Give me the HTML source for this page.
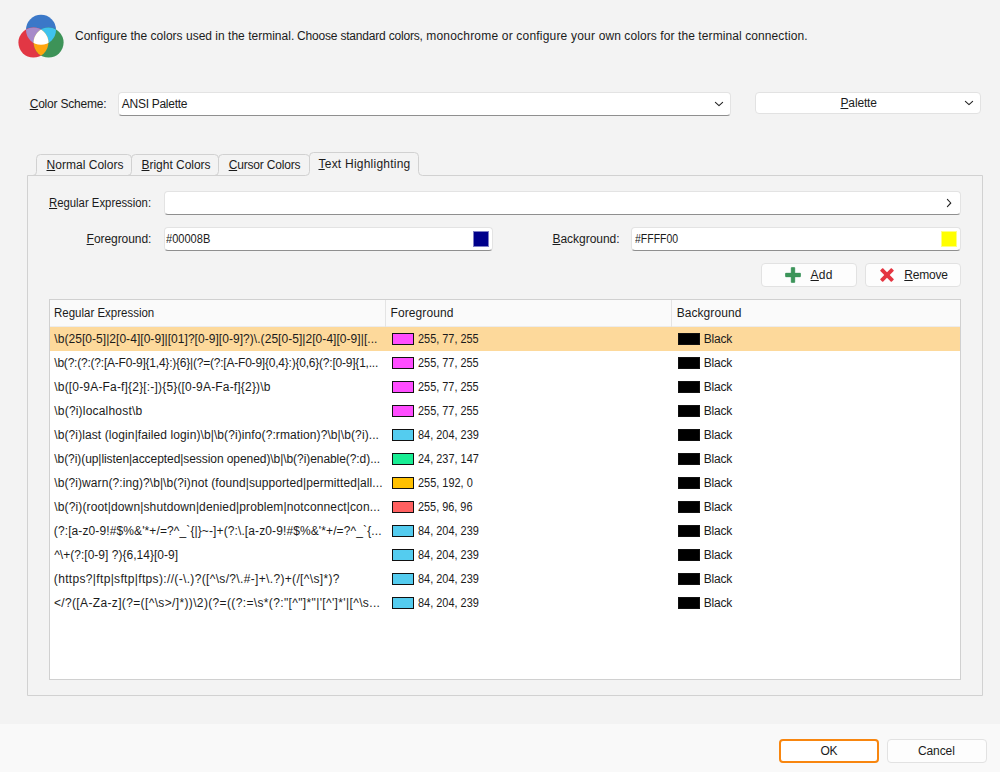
<!DOCTYPE html>
<html lang="en">
<head>
<meta charset="utf-8">
<title>Terminal Colors</title>
<style>
*{box-sizing:border-box;margin:0;padding:0}
html,body{width:1000px;height:772px;overflow:hidden;background:#f3f3f3}
body{position:relative;font-family:"Liberation Sans",sans-serif;font-size:12px;color:#1b1b1b;line-height:14px}
.a{position:absolute;white-space:nowrap}
.t{position:absolute;white-space:nowrap;height:14px}
u{text-decoration:underline;text-decoration-thickness:1px;text-underline-offset:1px}
.in{position:absolute;background:#fff;border:1px solid #e3e3e3;border-bottom-color:#8f8f8f;border-radius:4px}
.bt{position:absolute;background:#fdfdfd;border:1px solid #e2e2e2;border-radius:4px}
.sw{position:absolute;width:22px;height:12px;border:1px solid #111}
</style>
</head>
<body>

<div class="a" style="left:0;top:724px;width:1000px;height:48px;background:#f9f9f9"></div>
<svg class="a" style="left:14px;top:10px" width="54" height="52" viewBox="14 10 54 52">
<defs><clipPath id="cb"><circle cx="41" cy="29.8" r="15"/></clipPath><clipPath id="cr"><circle cx="33.4" cy="42.6" r="15"/></clipPath></defs>
<circle cx="41" cy="29.8" r="15" fill="#3b78c8"/>
<circle cx="33.4" cy="42.6" r="15" fill="#e23744"/>
<circle cx="48.6" cy="42.6" r="15" fill="#3d9358"/>
<circle cx="33.4" cy="42.6" r="15" fill="#a78bc9" clip-path="url(#cb)"/>
<circle cx="48.6" cy="42.6" r="15" fill="#3fc3ee" clip-path="url(#cb)"/>
<circle cx="48.6" cy="42.6" r="15" fill="#ffa50f" clip-path="url(#cr)"/>
<g clip-path="url(#cb)"><circle cx="48.6" cy="42.6" r="15" fill="#fff" clip-path="url(#cr)"/></g>
</svg>
<div class="in" style="left:118px;top:92px;width:613px;height:24px"></div>
<svg class="a" style="left:713px;top:99px" width="12" height="10"><path d="M2.4 3.4 L6 6.7 L9.6 3.4" fill="none" stroke="#222" stroke-width="1.1" stroke-linecap="round" stroke-linejoin="round"/></svg>
<div class="bt" style="left:755px;top:92px;width:226px;height:22px;background:#fff"></div>
<svg class="a" style="left:963px;top:98px" width="12" height="10"><path d="M2.4 3.35 L6 6.6 L9.6 3.35" fill="none" stroke="#222" stroke-width="1.1" stroke-linecap="round" stroke-linejoin="round"/></svg>
<svg class="a" style="left:0;top:140px" width="1000" height="570" viewBox="0 140 1000 570" fill="none" stroke="#d1d1d1" stroke-width="1">
<path d="M27.5 695.5 L27.5 175.5 L305.5 175.5 Q309.5 175.5 309.5 171.5 L309.5 156.5 Q309.5 152.5 313.5 152.5 L414.5 152.5 Q418.5 152.5 418.5 156.5 L418.5 171.5 Q418.5 175.5 422.5 175.5 L982.5 175.5 L982.5 695.5 Z"/>
<path d="M33 175.5 Q36.5 175.5 36.5 171.5 L36.5 158.5 Q36.5 154.5 40.5 154.5 L127.5 154.5 Q131.5 154.5 131.5 158.5 L131.5 171.5 Q131.5 175.5 127.5 175.5"/>
<path d="M131.5 158.5 Q131.5 154.5 135.5 154.5 L214.5 154.5 Q218.5 154.5 218.5 158.5 L218.5 171.5 Q218.5 175.5 214.5 175.5"/>
<path d="M218.5 158.5 Q218.5 154.5 222.5 154.5 L305.5 154.5 Q308.5 154.5 309.5 157"/>
</svg>
<div class="in" style="left:164px;top:191px;width:797px;height:24px"></div>
<svg class="a" style="left:944px;top:197px" width="10" height="12"><path d="M3.4 2.3 L6.8 6 L3.4 9.6" fill="none" stroke="#222" stroke-width="1.1" stroke-linecap="round" stroke-linejoin="round"/></svg>
<div class="in" style="left:164px;top:227px;width:329px;height:24px"></div>
<div class="a" style="left:473px;top:231px;width:16px;height:16px;background:#00008b;border:1px solid #7f7fc5"></div>
<div class="in" style="left:631px;top:227px;width:330px;height:24px"></div>
<div class="a" style="left:941px;top:231px;width:16px;height:16px;background:#ffff00;border:1px solid #ffff80"></div>
<div class="bt" style="left:761px;top:263px;width:96px;height:24px"></div>
<svg class="a" style="left:785px;top:267px" width="16" height="16" fill="#3d9559" stroke="#35905a" stroke-width="0.4"><rect x="6.1" y="0.2" width="3.8" height="15.6" rx="0.8"/><rect x="0.2" y="6.1" width="15.6" height="3.8" rx="0.8"/></svg>
<div class="bt" style="left:865px;top:263px;width:96px;height:24px"></div>
<svg class="a" style="left:879px;top:267px" width="16" height="16" fill="#e43541"><g transform="translate(8 8)"><rect x="-8" y="-1.9" width="16" height="3.8" rx="0.5" transform="rotate(45)"/><rect x="-8" y="-1.9" width="16" height="3.8" rx="0.5" transform="rotate(-45)"/></g></svg>
<div class="a" style="left:49px;top:299px;width:912px;height:381px;background:#fff;border:1px solid #d0d0d0"></div>
<div class="a" style="left:50px;top:300px;width:910px;height:27px;background:#fafafa;border-bottom:1px solid #ececec"></div>
<div class="a" style="left:385px;top:300px;width:1px;height:27px;background:#e4e4e4"></div>
<div class="a" style="left:671px;top:300px;width:1px;height:27px;background:#e4e4e4"></div>
<div class="a" style="left:50px;top:327px;width:910px;height:24px;background:#fdd99b"></div>
<div class="sw" style="left:392px;top:333px;background:#ff4dff"></div>
<div class="sw" style="left:678px;top:333px;background:#000"></div>
<div class="sw" style="left:392px;top:357px;background:#ff4dff"></div>
<div class="sw" style="left:678px;top:357px;background:#000"></div>
<div class="sw" style="left:392px;top:381px;background:#ff4dff"></div>
<div class="sw" style="left:678px;top:381px;background:#000"></div>
<div class="sw" style="left:392px;top:405px;background:#ff4dff"></div>
<div class="sw" style="left:678px;top:405px;background:#000"></div>
<div class="sw" style="left:392px;top:429px;background:#54ccef"></div>
<div class="sw" style="left:678px;top:429px;background:#000"></div>
<div class="sw" style="left:392px;top:453px;background:#18ed93"></div>
<div class="sw" style="left:678px;top:453px;background:#000"></div>
<div class="sw" style="left:392px;top:477px;background:#ffc000"></div>
<div class="sw" style="left:678px;top:477px;background:#000"></div>
<div class="sw" style="left:392px;top:501px;background:#ff6060"></div>
<div class="sw" style="left:678px;top:501px;background:#000"></div>
<div class="sw" style="left:392px;top:525px;background:#54ccef"></div>
<div class="sw" style="left:678px;top:525px;background:#000"></div>
<div class="sw" style="left:392px;top:549px;background:#54ccef"></div>
<div class="sw" style="left:678px;top:549px;background:#000"></div>
<div class="sw" style="left:392px;top:573px;background:#54ccef"></div>
<div class="sw" style="left:678px;top:573px;background:#000"></div>
<div class="sw" style="left:392px;top:597px;background:#54ccef"></div>
<div class="sw" style="left:678px;top:597px;background:#000"></div>
<div class="bt" style="left:779px;top:739px;width:100px;height:24px;border:2px solid #f8860f;border-radius:4px;background:#fff"></div>
<div class="bt" style="left:887px;top:739px;width:100px;height:24px"></div>
<div class="t" id="t0" style="left:75.0px;top:29px;letter-spacing:0.011px">Configure the colors used in the terminal.</div>
<div class="t" id="t1" style="left:297.0px;top:29px;letter-spacing:-0.187px">Choose standard colors,</div>
<div class="t" id="t2" style="left:426.3px;top:29px;letter-spacing:0.193px">monochrome or configure your own</div>
<div class="t" id="t3" style="left:624.3px;top:29px;letter-spacing:0.092px">colors for the terminal connection.</div>
<div class="t" id="t4" style="left:29.7px;top:97px;letter-spacing:-0.214px"><u>C</u>olor Scheme:</div>
<div class="t" id="t5" style="left:121.8px;top:97px;letter-spacing:-0.280px">ANSI Palette</div>
<div class="t" id="t6" style="left:840.5px;top:96px;letter-spacing:-0.157px"><u>P</u>alette</div>
<div class="t" id="t7" style="left:46.5px;top:158px;letter-spacing:0.030px"><u>N</u>ormal Colors</div>
<div class="t" id="t8" style="left:141.5px;top:158px;letter-spacing:-0.029px"><u>B</u>right Colors</div>
<div class="t" id="t9" style="left:228.7px;top:158px;letter-spacing:-0.186px"><u>C</u>ursor Colors</div>
<div class="t" id="t10" style="left:318.5px;top:157px;letter-spacing:0.229px"><u>T</u>ext Highlighting</div>
<div class="t" id="t11" style="left:49.2px;top:196px;transform:scaleX(0.9445);transform-origin:0 0"><u>R</u>egular Expression:</div>
<div class="t" id="t12" style="left:86.6px;top:232px;letter-spacing:-0.058px"><u>F</u>oreground:</div>
<div class="t" id="t13" style="left:166.3px;top:232px;transform:scaleX(0.9211);transform-origin:0 0">#00008B</div>
<div class="t" id="t14" style="left:552.5px;top:232px;letter-spacing:-0.035px"><u>B</u>ackground:</div>
<div class="t" id="t15" style="left:635.2px;top:232px;transform:scaleX(0.8744);transform-origin:0 0">#FFFF00</div>
<div class="t" id="t16" style="left:810.5px;top:268px;letter-spacing:0.334px"><u>A</u>dd</div>
<div class="t" id="t17" style="left:904.3px;top:268px;letter-spacing:-0.209px"><u>R</u>emove</div>
<div class="t" id="t18" style="left:54.3px;top:306px;transform:scaleX(0.9572);transform-origin:0 0">Regular Expression</div>
<div class="t" id="t19" style="left:390.6px;top:306px;letter-spacing:0.076px">Foreground</div>
<div class="t" id="t20" style="left:676.7px;top:306px;letter-spacing:0.064px">Background</div>
<div class="t" id="t21" style="left:820.4px;top:744px;letter-spacing:-0.138px">OK</div>
<div class="t" id="t22" style="left:917.9px;top:744px;letter-spacing:-0.087px">Cancel</div>
<div class="t" id="t23" style="left:54.3px;top:332px;letter-spacing:0.047px">\b(25[0-5]|2[0-4][0-9]|[01]?[0-9][0-9]?)\.(25[0-5]|2[0-4][0-9]|[...</div>
<div class="t" id="t24" style="left:417.5px;top:332px;transform:scaleX(0.9092);transform-origin:0 0">255, 77, 255</div>
<div class="t" id="t25" style="left:703.7px;top:332px;letter-spacing:-0.189px">Black</div>
<div class="t" id="t26" style="left:54.3px;top:356px;letter-spacing:-0.217px">\b(?:(?:(?:[A-F0-9]{1,4}:){6}|(?=(?:[A-F0-9]{0,4}:){0,6}(?:[0-9]{1,...</div>
<div class="t" id="t27" style="left:417.5px;top:356px;transform:scaleX(0.9092);transform-origin:0 0">255, 77, 255</div>
<div class="t" id="t28" style="left:703.7px;top:356px;letter-spacing:-0.189px">Black</div>
<div class="t" id="t29" style="left:54.3px;top:380px;letter-spacing:0.176px">\b([0-9A-Fa-f]{2}[:-]){5}([0-9A-Fa-f]{2})\b</div>
<div class="t" id="t30" style="left:417.5px;top:380px;transform:scaleX(0.9092);transform-origin:0 0">255, 77, 255</div>
<div class="t" id="t31" style="left:703.7px;top:380px;letter-spacing:-0.189px">Black</div>
<div class="t" id="t32" style="left:54.3px;top:404px;letter-spacing:0.194px">\b(?i)localhost\b</div>
<div class="t" id="t33" style="left:417.5px;top:404px;transform:scaleX(0.9092);transform-origin:0 0">255, 77, 255</div>
<div class="t" id="t34" style="left:703.7px;top:404px;letter-spacing:-0.189px">Black</div>
<div class="t" id="t35" style="left:54.3px;top:428px;letter-spacing:0.097px">\b(?i)last (login|failed login)\b|\b(?i)info(?:rmation)?\b|\b(?i)...</div>
<div class="t" id="t36" style="left:417.6px;top:428px;transform:scaleX(0.9110);transform-origin:0 0">84, 204, 239</div>
<div class="t" id="t37" style="left:703.7px;top:428px;letter-spacing:-0.189px">Black</div>
<div class="t" id="t38" style="left:54.3px;top:452px;letter-spacing:-0.068px">\b(?i)(up|listen|accepted|session opened)\b|\b(?i)enable(?:d)...</div>
<div class="t" id="t39" style="left:417.6px;top:452px;transform:scaleX(0.9112);transform-origin:0 0">24, 237, 147</div>
<div class="t" id="t40" style="left:703.7px;top:452px;letter-spacing:-0.189px">Black</div>
<div class="t" id="t41" style="left:54.3px;top:476px;letter-spacing:0.078px">\b(?i)warn(?:ing)?\b|\b(?i)not (found|supported|permitted|all...</div>
<div class="t" id="t42" style="left:417.6px;top:476px;transform:scaleX(0.9125);transform-origin:0 0">255, 192, 0</div>
<div class="t" id="t43" style="left:703.7px;top:476px;letter-spacing:-0.189px">Black</div>
<div class="t" id="t44" style="left:54.3px;top:500px;letter-spacing:0.131px">\b(?i)(root|down|shutdown|denied|problem|notconnect|con...</div>
<div class="t" id="t45" style="left:417.6px;top:500px;transform:scaleX(0.9070);transform-origin:0 0">255, 96, 96</div>
<div class="t" id="t46" style="left:703.7px;top:500px;letter-spacing:-0.189px">Black</div>
<div class="t" id="t47" style="left:53.8px;top:524px;letter-spacing:0.109px">(?:[a-z0-9!#$%&amp;'*+/=?^_`{|}~-]+(?:\.[a-z0-9!#$%&amp;'*+/=?^_`{...</div>
<div class="t" id="t48" style="left:417.6px;top:524px;transform:scaleX(0.9110);transform-origin:0 0">84, 204, 239</div>
<div class="t" id="t49" style="left:703.7px;top:524px;letter-spacing:-0.189px">Black</div>
<div class="t" id="t50" style="left:54.2px;top:548px;letter-spacing:0.023px">^\+(?:[0-9] ?){6,14}[0-9]</div>
<div class="t" id="t51" style="left:417.6px;top:548px;transform:scaleX(0.9110);transform-origin:0 0">84, 204, 239</div>
<div class="t" id="t52" style="left:703.7px;top:548px;letter-spacing:-0.189px">Black</div>
<div class="t" id="t53" style="left:53.8px;top:572px;letter-spacing:0.338px">(https?|ftp|sftp|ftps)://(-\.)?([^\s/?\.#-]+\.?)+(/[^\s]*)?</div>
<div class="t" id="t54" style="left:417.6px;top:572px;transform:scaleX(0.9110);transform-origin:0 0">84, 204, 239</div>
<div class="t" id="t55" style="left:703.7px;top:572px;letter-spacing:-0.189px">Black</div>
<div class="t" id="t56" style="left:53.9px;top:596px;letter-spacing:0.357px">&lt;/?([A-Za-z](?=([^\s&gt;/]*))\2)(?=((?:=\s*(?:"[^"]*"|'[^']*'|[^\s...</div>
<div class="t" id="t57" style="left:417.6px;top:596px;transform:scaleX(0.9110);transform-origin:0 0">84, 204, 239</div>
<div class="t" id="t58" style="left:703.7px;top:596px;letter-spacing:-0.189px">Black</div>
</body>
</html>
